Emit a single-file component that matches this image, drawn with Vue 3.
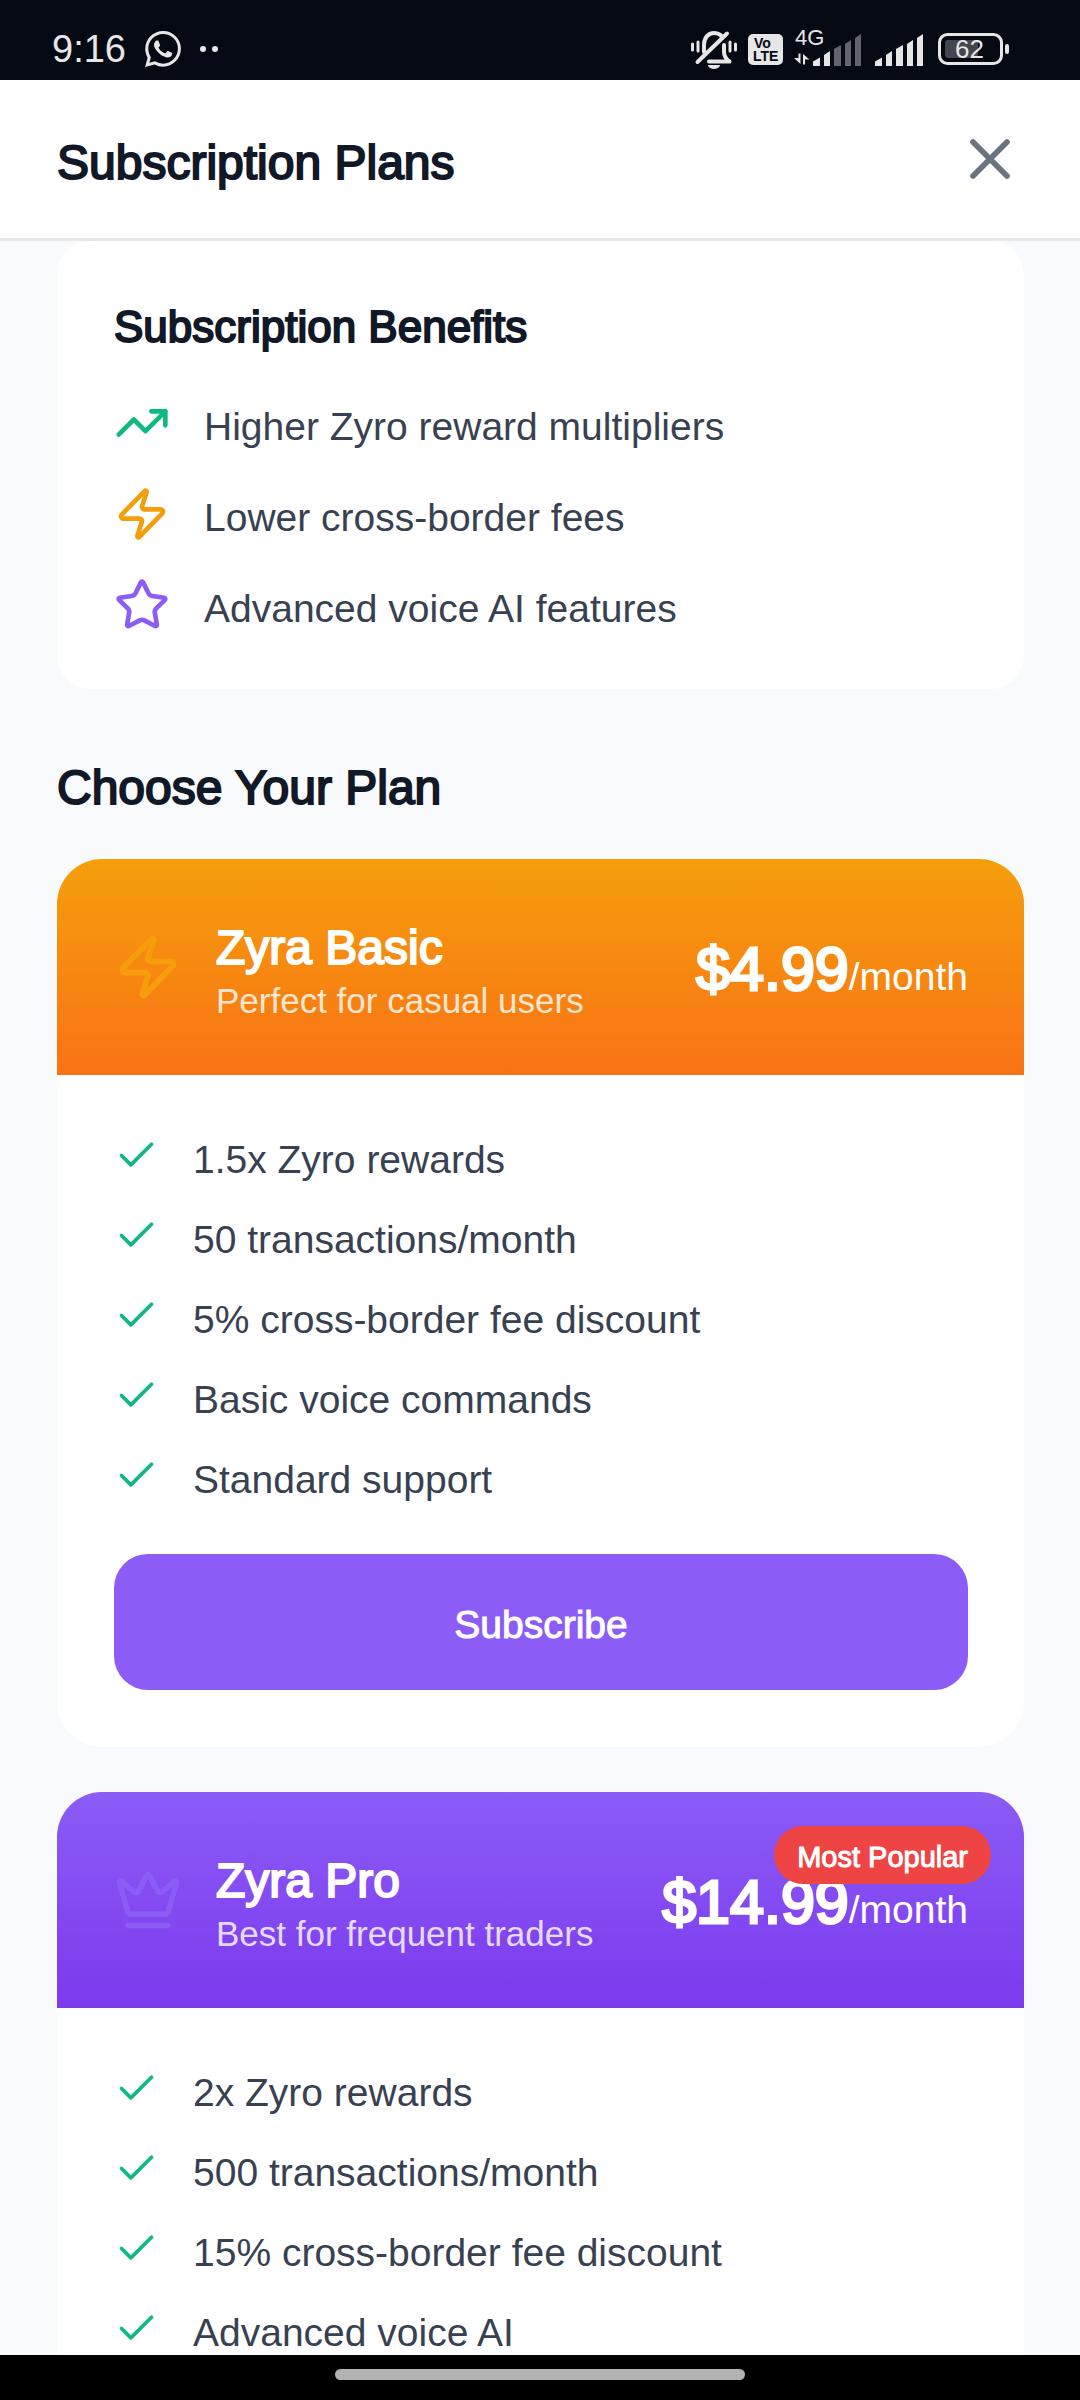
<script setup>
const icons = {
  trend: ['M22 7l-8.5 8.5-5-5L2 17', 'M16 7h6v6'],
  zap: [
    'M4 14a1 1 0 0 1-.78-1.63l9.9-10.2a.5.5 0 0 1 .86.46l-1.92 6.02A1 1 0 0 0 13 10h7a1 1 0 0 1 .78 1.63l-9.9 10.2a.5.5 0 0 1-.86-.46l1.92-6.02A1 1 0 0 0 11 14z',
  ],
  star: [
    'M11.525 2.295a.53.53 0 0 1 .95 0l2.31 4.679a2.123 2.123 0 0 0 1.595 1.16l5.166.756a.53.53 0 0 1 .294.904l-3.736 3.638a2.123 2.123 0 0 0-.611 1.878l.882 5.14a.53.53 0 0 1-.771.56l-4.618-2.428a2.122 2.122 0 0 0-1.973 0L6.396 21.01a.53.53 0 0 1-.77-.56l.881-5.139a2.122 2.122 0 0 0-.611-1.879L2.16 9.795a.53.53 0 0 1 .294-.906l5.165-.755a2.122 2.122 0 0 0 1.597-1.16z',
  ],
  crown: [
    'M11.562 3.266a.5.5 0 0 1 .876 0L15.39 8.87a1 1 0 0 0 1.516.294L21.183 5.5a.5.5 0 0 1 .798.519l-2.834 10.246a1 1 0 0 1-.956.734H5.81a1 1 0 0 1-.957-.734L2.02 6.02a.5.5 0 0 1 .798-.519l4.276 3.664a1 1 0 0 0 1.516-.294z',
    'M5 21h14',
  ],
}

const benefits = [
  { icon: 'trend', text: 'Higher Zyro reward multipliers' },
  { icon: 'zap', text: 'Lower cross-border fees' },
  { icon: 'star', text: 'Advanced voice AI features' },
]

const plans = [
  {
    id: 'basic',
    icon: 'zap',
    name: 'Zyra Basic',
    tagline: 'Perfect for casual users',
    price: '$4.99',
    features: [
      '1.5x Zyro rewards',
      '50 transactions/month',
      '5% cross-border fee discount',
      'Basic voice commands',
      'Standard support',
    ],
    action: 'Subscribe',
  },
  {
    id: 'pro',
    icon: 'crown',
    name: 'Zyra Pro',
    tagline: 'Best for frequent traders',
    price: '$14.99',
    badge: 'Most Popular',
    features: [
      '2x Zyro rewards',
      '500 transactions/month',
      '15% cross-border fee discount',
      'Advanced voice AI',
    ],
  },
]
</script>

<template>
  <div class="screen">
    <div class="status">
      <div class="status-left">
        <span class="time">9:16</span>
        <svg class="chat" viewBox="0 0 24 24" aria-hidden="true">
          <path d="M17.472 14.382c-.297-.149-1.758-.867-2.03-.967-.273-.099-.471-.148-.67.15-.197.297-.767.966-.94 1.164-.173.199-.347.223-.644.075-.297-.15-1.255-.463-2.39-1.475-.883-.788-1.48-1.761-1.653-2.059-.173-.297-.018-.458.13-.606.134-.133.298-.347.446-.52.149-.174.198-.298.298-.497.099-.198.05-.371-.025-.52-.075-.149-.669-1.612-.916-2.207-.242-.579-.487-.5-.669-.51-.173-.008-.371-.01-.57-.01-.198 0-.52.074-.792.372-.272.297-1.04 1.016-1.04 2.479 0 1.462 1.065 2.875 1.213 3.074.149.198 2.096 3.2 5.077 4.487.709.306 1.262.489 1.694.625.712.227 1.36.195 1.871.118.571-.085 1.758-.719 2.006-1.413.248-.694.248-1.289.173-1.413-.074-.124-.272-.198-.57-.347m-5.421 7.403h-.004a9.87 9.87 0 01-5.031-1.378l-.361-.214-3.741.982.998-3.648-.235-.374a9.86 9.86 0 01-1.51-5.26c.001-5.45 4.436-9.884 9.888-9.884 2.64 0 5.122 1.03 6.988 2.898a9.825 9.825 0 012.893 6.994c-.003 5.45-4.437 9.884-9.885 9.884m8.413-18.297A11.815 11.815 0 0012.05 0C5.495 0 .16 5.335.157 11.892c0 2.096.547 4.142 1.588 5.945L.057 24l6.305-1.654a11.882 11.882 0 005.683 1.448h.005c6.554 0 11.89-5.335 11.893-11.893a11.821 11.821 0 00-3.48-8.413Z" />
        </svg>
        <svg class="dots" viewBox="0 0 20 8" aria-hidden="true">
          <circle cx="4" cy="4" r="3" />
          <circle cx="16" cy="4" r="3" />
        </svg>
      </div>
      <div class="status-right">
        <svg width="46" height="40" viewBox="0 0 46 40" aria-hidden="true">
          <g fill="none" stroke="#e6e6e6" stroke-linecap="round" stroke-linejoin="round">
            <path stroke-width="3" d="M1.500 14v6M7 12v9M39 12v9M44.500 14v6" />
            <path stroke-width="4" d="M13 22v-7c0-7 4-12 10-12 3 0 5.500 1 7.500 3" />
            <path stroke-width="4" d="M33 15v7c0 4 2 7 5.500 9.500H18" />
            <path stroke-width="4" d="M36 3.500L6.500 32" />
          </g>
          <path d="M17 35h12a6 4 0 0 1-12 0z" fill="#e6e6e6" />
        </svg>
        <svg width="35" height="40" viewBox="0 0 35 40" aria-hidden="true">
          <rect y="4" width="35" height="31" rx="5" fill="#e6e6e6" />
          <text x="6" y="18" class="lte">Vo</text>
          <text x="5" y="31" class="lte">LTE</text>
        </svg>
        <svg width="68" height="54" viewBox="0 -14 68 54" aria-hidden="true">
          <text x="1" y="15" class="net">4G</text>
          <path d="M4.500 23.500h2v10.500l-6.500-6h4.500zM9 34.500V24l6.500 5.500h-4.500v5z" fill="#e6e6e6" />
          <path d="M19 31.500l7-4V36h-7zM30 25l6-4v15h-6z" fill="#e6e6e6" />
          <path d="M40 19l7-4v21h-7zM51 14l6-4v26h-6zM61 8l6-4v32h-6z" fill="#62656c" />
        </svg>
        <svg class="bars" width="49" height="40" viewBox="0 0 49 40" aria-hidden="true">
          <path d="M0 31.500l7-4V36H0zM11 25l6-4v15h-6zM21 19l7-4v21h-7zM32 14l6-4v26h-6zM42 8l6-4v32h-6z" fill="#e6e6e6" />
        </svg>
        <svg class="battery" width="71" height="40" viewBox="0 0 71 40" aria-hidden="true">
          <rect x="1.500" y="4.500" width="62" height="29" rx="8" fill="none" stroke="#e6e6e6" stroke-width="3" />
          <rect x="7" y="10" width="33" height="18" rx="3" fill="#43464f" />
          <rect x="67" y="14" width="4" height="10" rx="2" fill="#e6e6e6" />
          <text x="17" y="28" class="charge">62</text>
        </svg>
      </div>
    </div>

    <header class="topbar">
      <h1>Subscription Plans</h1>
      <button class="close" type="button" aria-label="Close">
        <svg class="icon" viewBox="0 0 24 24"><path d="M18 6L6 18M6 6l12 12" /></svg>
      </button>
    </header>

    <main class="content">
      <section class="benefits">
        <h2>Subscription Benefits</h2>
        <ul class="benefit-list">
          <li v-for="b in benefits" :key="b.text">
            <svg class="icon benefit-icon" :class="b.icon" viewBox="0 0 24 24" aria-hidden="true">
              <path v-for="d in icons[b.icon]" :key="d" :d="d" />
            </svg>
            <span class="row-text">{{ b.text }}</span>
          </li>
        </ul>
      </section>

      <h2 class="choose">Choose Your Plan</h2>

      <article v-for="p in plans" :key="p.id" class="plan" :class="p.id">
        <div class="plan-head">
          <svg class="icon plan-icon" viewBox="0 0 24 24" aria-hidden="true">
            <path v-for="d in icons[p.icon]" :key="d" :d="d" />
          </svg>
          <div class="plan-name">
            <h3>{{ p.name }}</h3>
            <p>{{ p.tagline }}</p>
          </div>
          <div class="price"><strong>{{ p.price }}</strong><span>/month</span></div>
          <span v-if="p.badge" class="badge">{{ p.badge }}</span>
        </div>
        <div class="plan-body">
          <ul class="feature-list">
            <li v-for="f in p.features" :key="f">
              <svg class="icon check" viewBox="0 0 24 24" aria-hidden="true"><path d="M20 6L9 17l-5-5" /></svg>
              <span class="row-text">{{ f }}</span>
            </li>
          </ul>
          <button v-if="p.action" class="subscribe" type="button">{{ p.action }}</button>
        </div>
      </article>
    </main>

    <div class="navbar"><div class="pill"></div></div>
  </div>
</template>

<style>
body {
  margin: 0;
  background: #f9fafb;
}
</style>

<style scoped>
.screen {
  display: flex;
  flex-direction: column;
  height: 100vh;
  background: #f9fafb;
  color: #111827;
  font-family: "Liberation Sans", Arial, sans-serif;
}
h1, h2, h3, p, ul {
  margin: 0;
  padding: 0;
  font-weight: 400;
  list-style: none;
}
button {
  border: 0;
  font-family: inherit;
  cursor: pointer;
}
svg {
  display: block;
  flex: none;
}
.icon {
  fill: none;
  stroke: currentColor;
  stroke-width: 2;
  stroke-linecap: round;
  stroke-linejoin: round;
}

.status {
  flex: none;
  display: flex;
  justify-content: space-between;
  height: 80px;
  padding: 0 71px 0 52px;
  background: #050914;
  color: #e6e6e6;
}
.status-left {
  display: flex;
  align-items: center;
  padding-top: 17px;
}
.time {
  font-size: 38px;
  line-height: 44px;
}
.chat {
  width: 36px;
  height: 36px;
  margin-left: 19px;
  fill: #e6e6e6;
}
.dots {
  width: 20px;
  height: 8px;
  margin-left: 18px;
  fill: #e6e6e6;
}
.status-right {
  display: flex;
  align-items: flex-end;
  gap: 11px;
  padding-bottom: 10px;
}
.bars {
  margin-left: 2px;
}
.battery {
  margin-left: 3px;
}
.lte {
  font-size: 14px;
  font-weight: 700;
  fill: #050914;
}
.net {
  font-size: 22px;
  fill: #e6e6e6;
}
.charge {
  font-size: 26px;
  fill: #e6e6e6;
}

.topbar {
  flex: none;
  display: flex;
  align-items: center;
  justify-content: space-between;
  height: 158px;
  padding: 0 56px 0 57px;
  background: #fff;
  border-bottom: 3px solid #e5e7eb;
}
.topbar h1 {
  padding-top: 8px;
  font-size: 48px;
  line-height: 60px;
  -webkit-text-stroke: 2px;
}
.close {
  padding: 0;
  background: none;
  color: #6b7280;
}
.close svg {
  width: 68px;
  height: 68px;
}

.content {
  flex: 1;
  min-height: 0;
  padding: 0 56px 0 57px;
  overflow-y: auto;
  scrollbar-width: none;
}
.benefits {
  padding: 58px 56px 56px 57px;
  background: #fff;
  border-radius: 34px;
}
.benefits h2 {
  margin-bottom: 39px;
  font-size: 44px;
  line-height: 56px;
  -webkit-text-stroke: 2px;
}
.benefit-list {
  display: flex;
  flex-direction: column;
  gap: 34px;
}
.feature-list {
  display: flex;
  flex-direction: column;
  gap: 23px;
}
li {
  display: flex;
  align-items: center;
  gap: 34px;
  color: #374151;
}
.row-text {
  padding-top: 8px;
  font-size: 39px;
  line-height: 49px;
}
.benefit-icon {
  width: 56px;
  height: 56px;
}
.trend {
  color: #10b981;
}
.zap {
  color: #f59e0b;
}
.star {
  color: #8b5cf6;
}
.choose {
  margin: 69px 0 41px;
  font-size: 48px;
  line-height: 60px;
  -webkit-text-stroke: 2px;
}

.plan {
  margin-bottom: 45px;
  background: #fff;
  border-radius: 45px;
  overflow: hidden;
}
.plan-head {
  position: relative;
  display: flex;
  align-items: center;
  min-height: 216px;
  padding: 0 56px 0 57px;
  color: #fff;
}
.basic .plan-head {
  background: linear-gradient(#f59e0b, #f97316);
}
.pro .plan-head {
  background: linear-gradient(#8b5cf6, #7c3aed);
}
.plan-icon {
  width: 68px;
  height: 68px;
  margin-right: 34px;
}
.basic .plan-icon {
  color: #f59e0b;
}
.pro .plan-icon {
  color: #8b5cf6;
}
.plan-name {
  flex: 1;
  padding-top: 12px;
}
.plan-name h3 {
  font-size: 48px;
  line-height: 56px;
  -webkit-text-stroke: 2px;
}
.plan-name p {
  font-size: 35px;
  line-height: 50px;
  opacity: 0.8;
}
.price {
  padding-top: 20px;
  line-height: 72px;
  white-space: nowrap;
}
.price strong {
  font-size: 61px;
  font-weight: 400;
  -webkit-text-stroke: 3px;
}
.price span {
  font-size: 39px;
}
.badge {
  position: absolute;
  top: 34px;
  right: 33px;
  padding: 4px 23px 0;
  border-radius: 29px;
  background: #ef4444;
  font-size: 29px;
  line-height: 54px;
  -webkit-text-stroke: 1px;
}
.plan-body {
  padding: 52px 56px 57px 57px;
}
.check {
  width: 45px;
  height: 45px;
  color: #10b981;
}
.subscribe {
  display: block;
  width: 100%;
  margin-top: 50px;
  padding: 46px 0 40px;
  border-radius: 34px;
  background: #8b5cf6;
  color: #fff;
  font-size: 39px;
  line-height: 50px;
  -webkit-text-stroke: 1px;
}

.navbar {
  flex: none;
  display: flex;
  align-items: center;
  justify-content: center;
  height: 45px;
  background: #000;
}
.pill {
  width: 38%;
  height: 11px;
  margin-bottom: 6px;
  border-radius: 6px;
  background: #b3b3b3;
}
</style>
